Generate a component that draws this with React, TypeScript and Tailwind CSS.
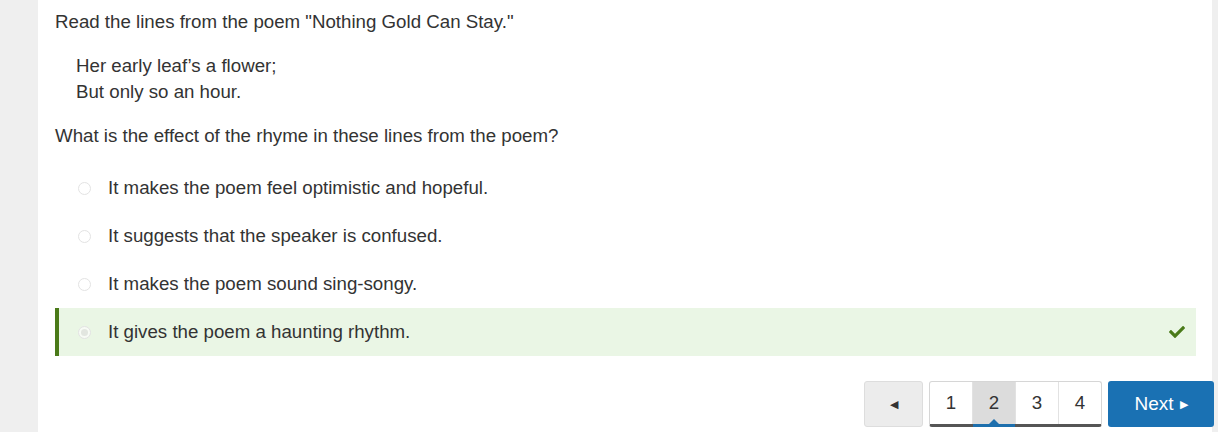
import { FaCheck } from "react-icons/fa";

const OPTIONS = [
  { text: "It makes the poem feel optimistic and hopeful.", picked: false },
  { text: "It suggests that the speaker is confused.", picked: false },
  { text: "It makes the poem sound sing-songy.", picked: false },
  { text: "It gives the poem a haunting rhythm.", picked: true },
];

function Radio({ on }: { on: boolean }) {
  return (
    <span className="flex h-[13px] w-[13px] items-center justify-center rounded-full border border-[#e3e3e3] bg-white/60">
      {on && <span className="h-[7px] w-[7px] rounded-full bg-[#e2e6e0]" />}
    </span>
  );
}

export default function App() {
  return (
    <div
      className="flex h-[432px] w-[1218px] overflow-hidden bg-[#efefef] text-[18.7px] text-[#333333]"
      style={{ fontFamily: '"Liberation Sans", Arial, sans-serif' }}
    >
      <div className="w-[38px] shrink-0" />
      <div className="flex w-[1174px] shrink-0 flex-col bg-white pl-[17px] pr-[16px] pt-[9px]">
        <p className="leading-[26px]">Read the lines from the poem "Nothing Gold Can Stay."</p>
        <div className="mt-[18px] pl-[21px] leading-[26px]">
          <div>Her early leaf’s a flower;</div>
          <div>But only so an hour.</div>
        </div>
        <p className="mt-[18px] leading-[26px]">What is the effect of the rhyme in these lines from the poem?</p>

        <div className="mt-[15px] flex flex-col">
          {OPTIONS.map((o) => (
            <div
              key={o.text}
              className={
                o.picked
                  ? "flex h-[48px] items-center border-l-4 border-[#4a7a19] bg-[#eaf6e5] pl-[19px] pr-[11px]"
                  : "flex h-[48px] items-center border-l-4 border-transparent pl-[19px] pr-[11px]"
              }
            >
              <Radio on={o.picked} />
              <span className="ml-[17px] flex-1 leading-[26px]">{o.text}</span>
              {o.picked && <FaCheck className="text-[16px] text-[#4a7a19]" />}
            </div>
          ))}
        </div>

        <div className="-mr-[18px] mt-[25px] flex items-start justify-end gap-[6px]">
          <button className="flex h-[46px] w-[59px] items-center justify-center rounded-[3px] border border-[#dddddd] bg-[#ececec] text-[#333]">
            <span className="text-[11px]">◀</span>
          </button>
          <div className="flex h-[46px] rounded-[3px] border border-[#d6d6d6] border-b-[3px] border-b-[#555555] bg-white">
            {["1", "2", "3", "4"].map((n, i) => (
              <div
                key={n}
                className={
                  "relative flex items-center justify-center " +
                  (i > 0 ? "w-[43px] border-l border-[#e2e2e2] " : "w-[42px] ") +
                  (n === "2" ? "bg-[#dcdcdc]" : "")
                }
              >
                {n}
                {n === "2" && (
                  <>
                    <span className="absolute bottom-[-3px] left-0 right-0 h-[3px] bg-[#1d6fad]" />
                    <span className="absolute bottom-0 left-1/2 h-0 w-0 -translate-x-1/2 border-x-[5px] border-b-[5px] border-x-transparent border-b-[#1d6fad]" />
                  </>
                )}
              </div>
            ))}
          </div>
          <button className="flex h-[46px] w-[106px] shrink-0 items-center justify-center gap-[6px] rounded-[3px] bg-[#1a71b3] text-[19px] text-white">
            Next <span className="text-[11px]">▶</span>
          </button>
        </div>
      </div>
    </div>
  );
}
